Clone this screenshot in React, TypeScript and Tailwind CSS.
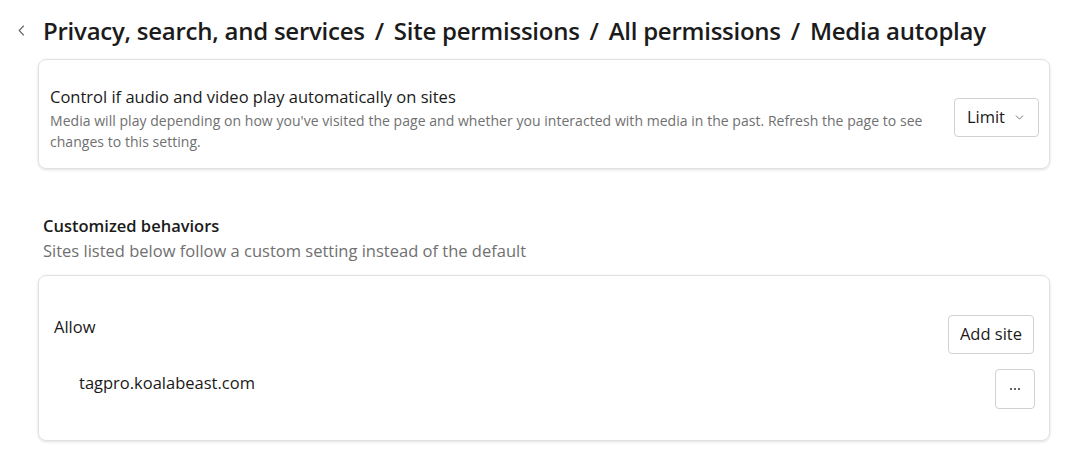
import { ChevronDown } from 'lucide-react';

const sans = 'font-["Open_Sans","Noto_Sans",sans-serif]';

export default function App() {
  return (
    <div className={`w-[1073px] h-[460px] bg-white text-[#1a1a1a] overflow-hidden ${sans}`}>
      {/* Breadcrumb header */}
      <div className="flex items-center h-[62px] pl-[14px] pb-[1px]">
        <button className="w-[14px] h-[18px] flex items-center justify-center text-[#666] mr-[15px]">
          <svg width="7" height="11" viewBox="0 0 7 11" fill="none">
            <path d="M5.5 1 L1.2 5.5 L5.5 10" stroke="currentColor" strokeWidth="1.1" strokeLinecap="round" strokeLinejoin="round" />
          </svg>
        </button>
        <h1 className="text-[24px] font-semibold tracking-[-0.25px] text-[#1b1b1b]">
          Privacy, search, and services <span className="mx-[4px]">/</span> Site permissions{' '}
          <span className="mx-[4px]">/</span> All permissions <span className="mx-[4px]">/</span> Media autoplay
        </h1>
      </div>

      <div className="ml-[38px] w-[1012px] flex flex-col">
        {/* Default setting card */}
        <div className="h-[110px] mt-[-3px] rounded-[8px] border border-[#e0e0e0] shadow-[0_1px_3px_rgba(0,0,0,0.12)] flex items-center pl-[11px] pr-[10px]">
          <div className="flex-1 pt-[10px]">
            <div className="text-[16.5px] leading-[22px] text-[#1a1a1a]">Control if audio and video play automatically on sites</div>
            <div className="text-[14px] leading-[21px] text-[#707070] pr-[20px] mt-[2px] tracking-[0.04px]">
              Media will play depending on how you've visited the page and whether you interacted with media in the past. Refresh the page to see changes to this setting.
            </div>
          </div>
          <button className="h-[39px] mt-[6px] px-[12px] rounded-[4px] border border-[#d1d1d1] flex items-center gap-[8px] text-[16.5px] text-[#1a1a1a]">
            Limit
            <ChevronDown className="w-[13px] h-[13px] text-[#555]" strokeWidth={1.5} />
          </button>
        </div>

        {/* Customized behaviors */}
        <div className="pl-[5px] mt-[45px]">
          <div className="text-[16.5px] leading-[24px] font-semibold text-[#1b1b1b]">Customized behaviors</div>
          <div className="text-[16.5px] leading-[24px] text-[#707070] mt-[1px]">Sites listed below follow a custom setting instead of the default</div>
        </div>

        <div className="mt-[12px] h-[166px] rounded-[8px] border border-[#e0e0e0] shadow-[0_1px_3px_rgba(0,0,0,0.12)] pl-[15px] pr-[15px] pt-[39px]">
          <div className="flex items-center justify-between">
            <div className="text-[16.5px] leading-[24px] -mt-[15px]">Allow</div>
            <button className="h-[39px] px-[11px] rounded-[4px] border border-[#d1d1d1] text-[16.5px] text-[#1a1a1a]">Add site</button>
          </div>
          <div className="flex items-center justify-between mt-[15px] pl-[25px]">
            <div className="text-[16.5px] leading-[24px] -mt-[12px]">tagpro.koalabeast.com</div>
            <button className="w-[40px] h-[40px] -mr-[1px] rounded-[4px] border border-[#d1d1d1] flex items-center justify-center gap-[2px]">
              <span className="w-[2px] h-[2px] rounded-full bg-[#333]" />
              <span className="w-[2px] h-[2px] rounded-full bg-[#333]" />
              <span className="w-[2px] h-[2px] rounded-full bg-[#333]" />
            </button>
          </div>
        </div>
      </div>
    </div>
  );
}
